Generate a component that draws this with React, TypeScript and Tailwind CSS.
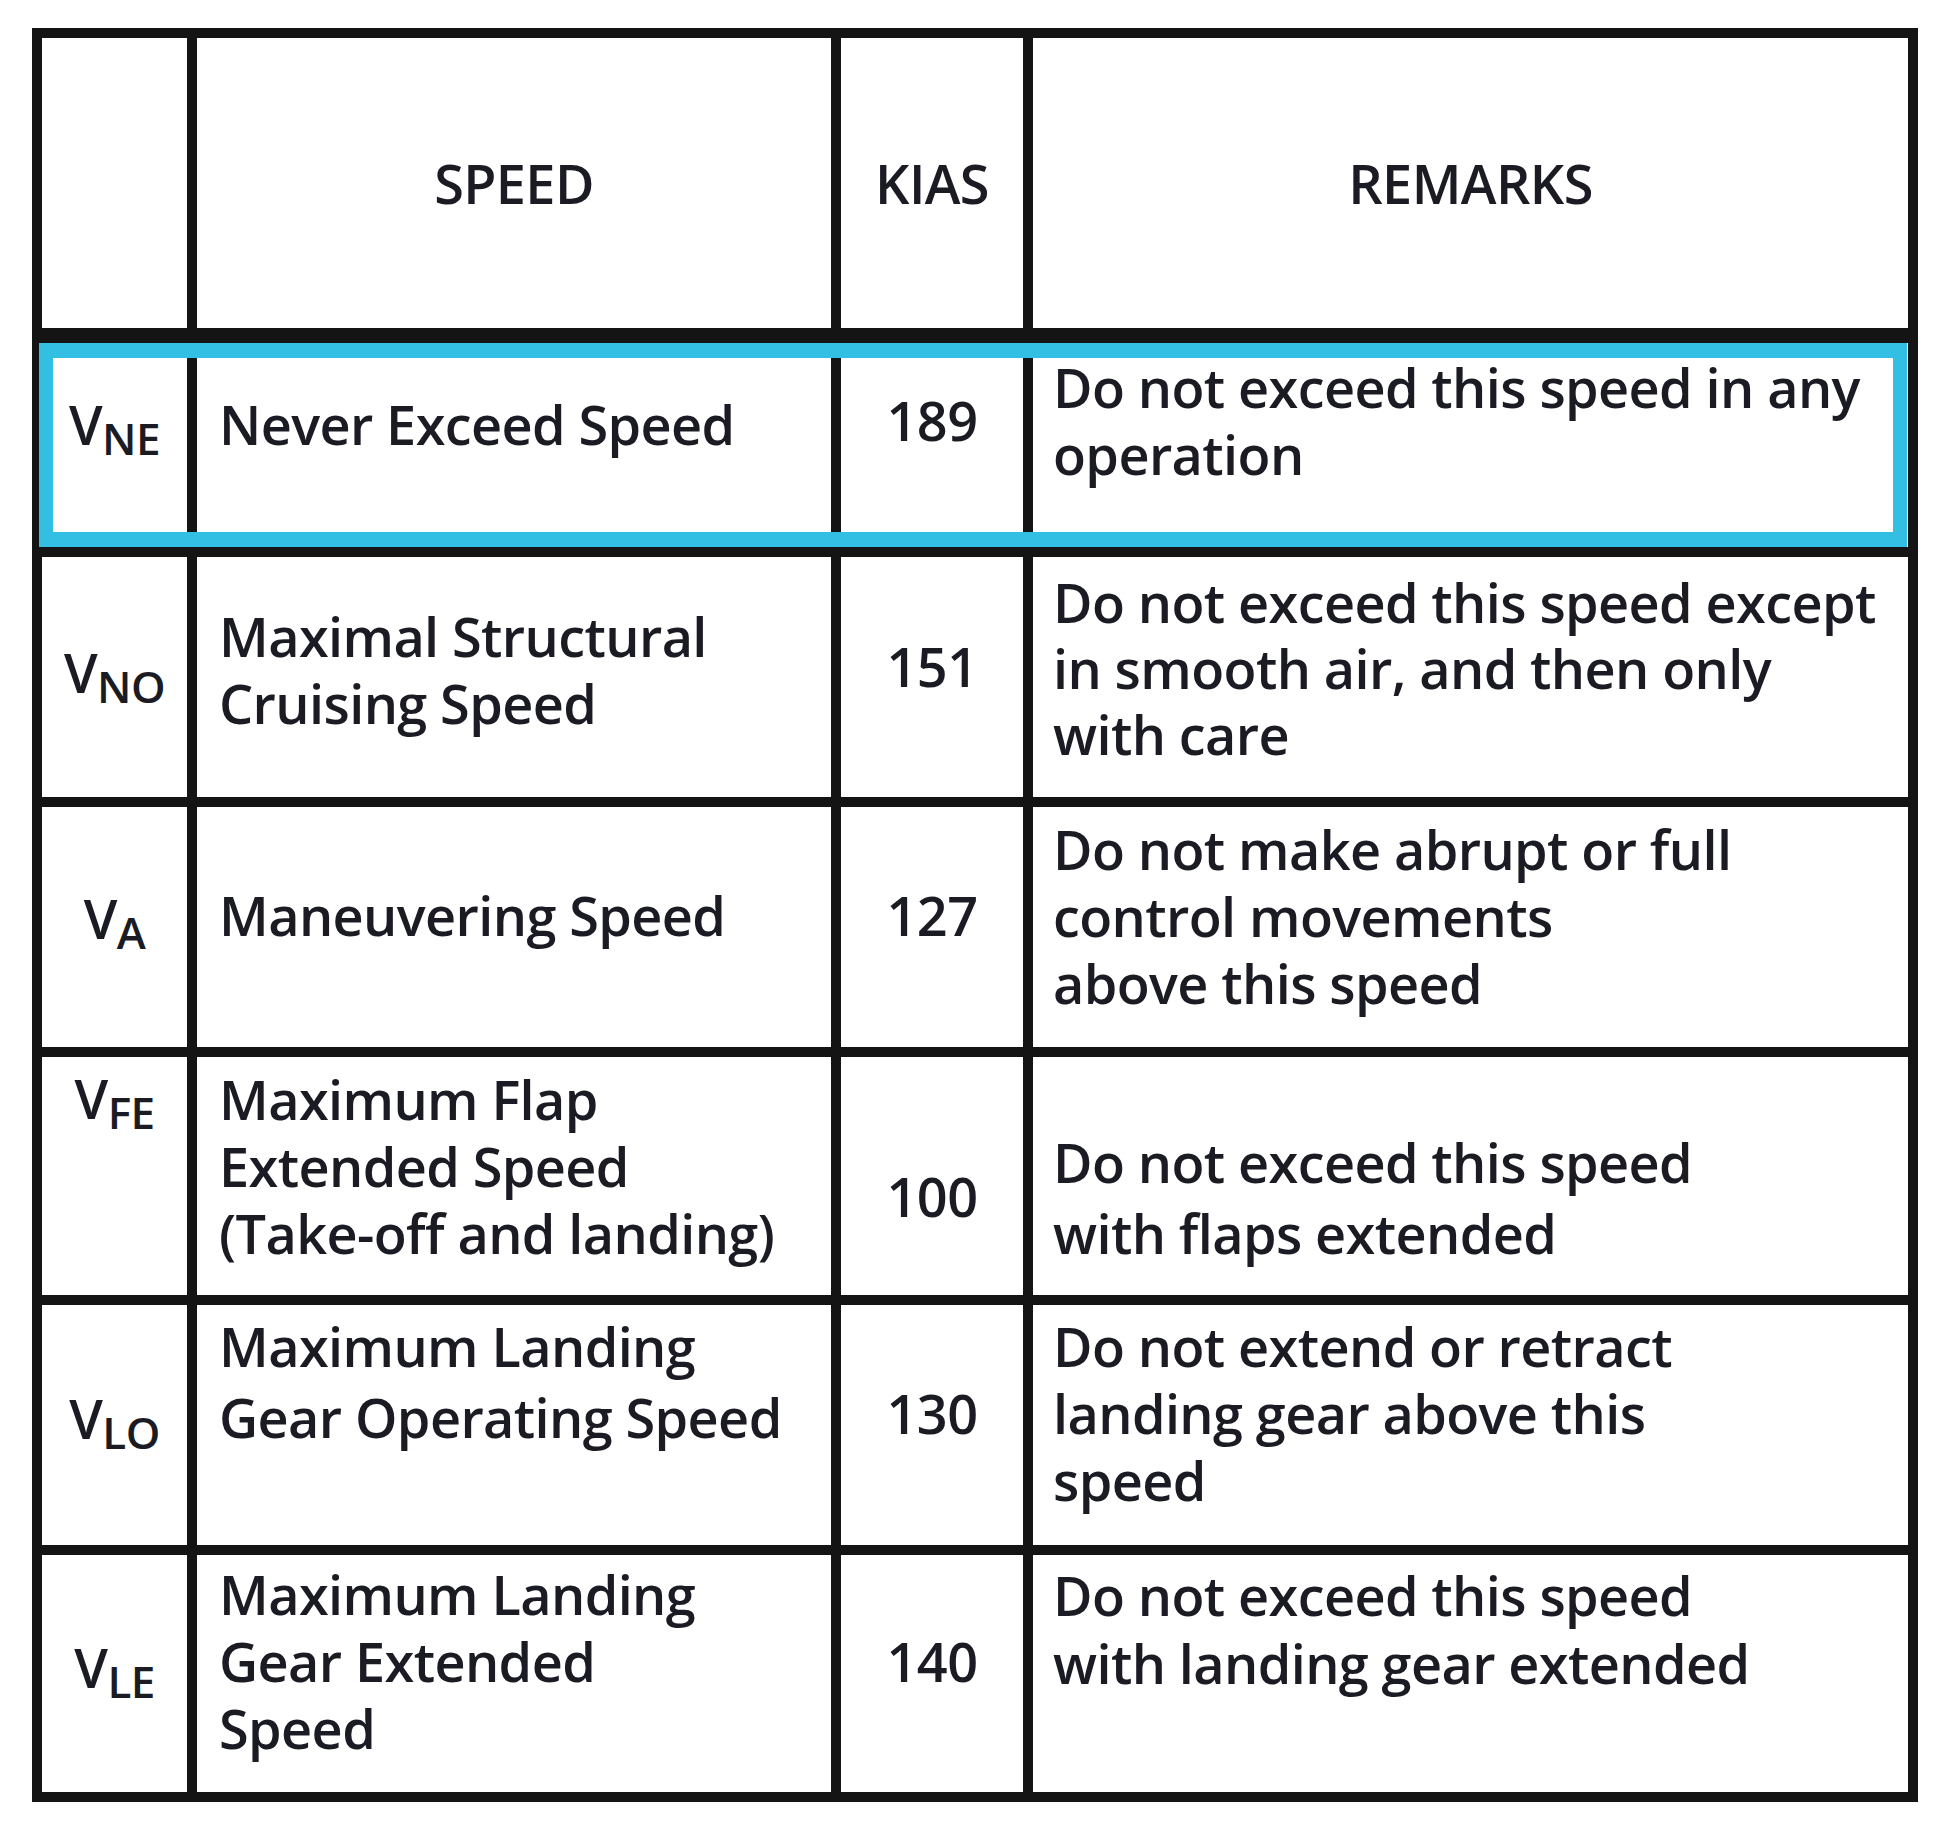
import { Fragment } from "react";

type SpeedRow = {
  sub: string;
  speed: string[];
  kias: string;
  remarks: string[];
  symCls: string;
  speedCls: string;
  kiasCls: string;
  remCls: string;
};

const rows: SpeedRow[] = [
  {
    sub: "NE",
    speed: ["Never Exceed Speed"],
    kias: "189",
    remarks: ["Do not exceed this speed in any", "operation"],
    symCls: "pt-[48px]",
    speedCls: "pt-[48px] leading-[67px]",
    kiasCls: "pt-[44px]",
    remCls: "pt-[11px] leading-[67px]",
  },
  {
    sub: "NO",
    speed: ["Maximal Structural", "Cruising Speed"],
    kias: "151",
    remarks: ["Do not exceed this speed except", "in smooth air, and then only", "with care"],
    symCls: "pt-[82px]",
    speedCls: "pt-[46px] leading-[67px]",
    kiasCls: "pt-[76px]",
    remCls: "pt-[12px] leading-[66px]",
  },
  {
    sub: "A",
    speed: ["Maneuvering Speed"],
    kias: "127",
    remarks: ["Do not make abrupt or full", "control movements", "above this speed"],
    symCls: "pt-[78px]",
    speedCls: "pt-[75px] leading-[67px]",
    kiasCls: "pt-[75px]",
    remCls: "pt-[9px] leading-[67px]",
  },
  {
    sub: "FE",
    speed: ["Maximum Flap", "Extended Speed", "(Take-off and landing)"],
    kias: "100",
    remarks: ["Do not exceed this speed", "with flaps extended"],
    symCls: "pt-[8px]",
    speedCls: "pt-[9px] leading-[67px]",
    kiasCls: "pt-[106px]",
    remCls: "pt-[70px] leading-[71px]",
  },
  {
    sub: "LO",
    speed: ["Maximum Landing", "Gear Operating Speed"],
    kias: "130",
    remarks: ["Do not extend or retract", "landing gear above this", "speed"],
    symCls: "pt-[80px]",
    speedCls: "pt-[6px] leading-[71px]",
    kiasCls: "pt-[75px]",
    remCls: "pt-[8px] leading-[67px]",
  },
  {
    sub: "LE",
    speed: ["Maximum Landing", "Gear Extended", "Speed"],
    kias: "140",
    remarks: ["Do not exceed this speed", "with landing gear extended"],
    symCls: "pt-[79px]",
    speedCls: "pt-[6px] leading-[67px]",
    kiasCls: "pt-[73px]",
    remCls: "pt-[6px] leading-[68px]",
  },
];

function Lines({ lines }: { lines: string[] }) {
  return (
    <p className="whitespace-nowrap">
      {lines.map((l, i) => (
        <Fragment key={l}>
          {i > 0 && <br />}
          {l}
        </Fragment>
      ))}
    </p>
  );
}

export default function App() {
  return (
    <div className="w-[1949px] h-[1831px] bg-white pl-[32px] pt-[28px] font-['Open_Sans',sans-serif] font-semibold text-[54px] tracking-[-0.6px] leading-[67px] text-[#1b1b24]">
      <div className="relative grid w-[1886px] grid-cols-[145px_634px_182px_875px] grid-rows-[295px_204px_240px_240px_238px_240px_237px] gap-[10px] bg-[#141414] p-[10px]">
        {/* header */}
        <div className="bg-white border-b-[5px] border-[#141414]" />
        <div className="flex items-center justify-center bg-white border-b-[5px] border-[#141414]">SPEED</div>
        <div className="flex items-center justify-center bg-white border-b-[5px] border-[#141414]">KIAS</div>
        <div className="flex items-center justify-center bg-white border-b-[5px] border-[#141414]">REMARKS</div>

        {rows.map((r) => (
          <div key={r.sub} className="contents">
            <div className={`flex items-start justify-center bg-white ${r.symCls}`}>
              <span className="whitespace-nowrap">
                V<span className="text-[44px] align-[-10px]">{r.sub}</span>
              </span>
            </div>
            <div className={`flex items-start bg-white pl-[22px] ${r.speedCls}`}>
              <Lines lines={r.speed} />
            </div>
            <div className={`flex items-start justify-center bg-white ${r.kiasCls}`}>{r.kias}</div>
            <div className={`flex items-start bg-white pl-[20px] ${r.remCls}`}>
              <Lines lines={r.remarks} />
            </div>
          </div>
        ))}

        {/* highlight around first row */}
        <div className="absolute left-[7px] top-[315px] w-[1868px] h-[204px] border-[14px] border-t-[15px] border-b-[15px] border-[#33bfe3]" />
      </div>
    </div>
  );
}
